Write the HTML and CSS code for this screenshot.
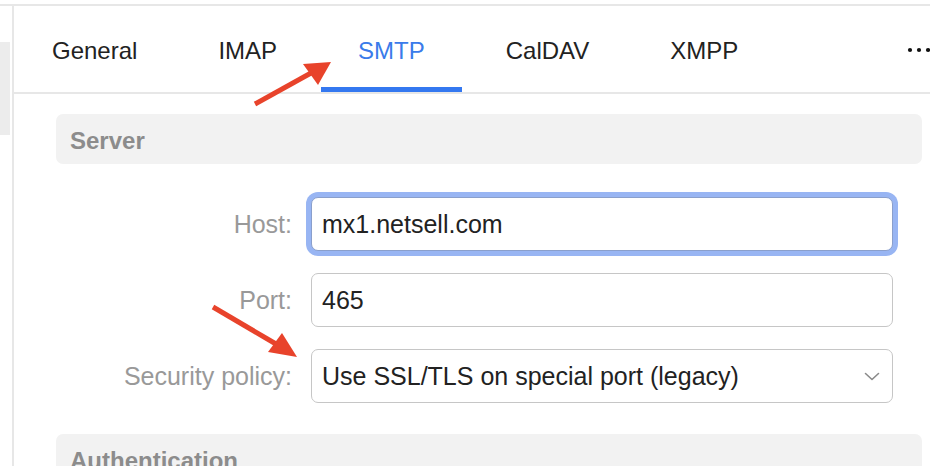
FILE: index.html
```html
<!DOCTYPE html>
<html lang="en">
<head>
    <meta charset="UTF-8">
    <meta name="viewport" content="width=device-width, initial-scale=1.0">
    <title>Account settings - SMTP</title>
    <link rel="stylesheet" href="styles.css">
</head>
<body>
    <div class="topline"></div>
    <div class="layout">
        <div class="sidebar">
            <div class="sidebar-item"></div>
        </div>

        <div class="main">
            <nav class="tabs">
                <div class="tab">General</div>
                <div class="tab">IMAP</div>
                <div class="tab active">SMTP</div>
                <div class="tab">CalDAV</div>
                <div class="tab">XMPP</div>
                <div class="more">
                    <svg width="30" height="8" viewBox="0 0 30 8">
                        <circle cx="10" cy="4" r="2.1" fill="#111"/>
                        <circle cx="19" cy="4" r="2.1" fill="#111"/>
                        <circle cx="28" cy="4" r="2.1" fill="#111"/>
                    </svg>
                </div>
            </nav>

            <div class="content">
                <div class="section-title">Server</div>

                <div class="form">
                    <label class="label">Host:</label>
                    <div class="field focused">mx1.netsell.com</div>

                    <label class="label">Port:</label>
                    <div class="field">465</div>

                    <label class="label">Security policy:</label>
                    <div class="field select">
                        <span>Use SSL/TLS on special port (legacy)</span>
                        <svg width="16" height="9" viewBox="0 0 16 9">
                            <path d="M1.5 1.5 L8 7.5 L14.5 1.5" fill="none" stroke="#8a8a8a" stroke-width="1.6" stroke-linecap="round" stroke-linejoin="round"/>
                        </svg>
                    </div>
                </div>

                <div class="section-title">Authentication</div>
            </div>
        </div>
    </div>

    <!-- annotation arrows drawn over the screenshot -->
    <svg class="arrows" width="930" height="466" viewBox="0 0 930 466">
        <line x1="255" y1="104" x2="311" y2="73" stroke="#e8432b" stroke-width="5"/>
        <polygon points="331,62 303,64 318,85" fill="#e8432b"/>
        <line x1="213" y1="307" x2="276" y2="344" stroke="#e8432b" stroke-width="5"/>
        <polygon points="297,357 268,352 282,333" fill="#e8432b"/>
    </svg>
</body>
</html>
```

FILE: styles.css
```css
body {
    margin: 0;
    width: 930px;
    height: 466px;
    overflow: hidden;
    background: #fff;
    font-family: "Liberation Sans", Arial, sans-serif;
    color: #222;
    position: relative;
}
.topline {
    height: 4px;
    border-bottom: 2px solid #e7e7e7;
}
.layout {
    display: flex;
}
.sidebar {
    width: 12px;
    border-right: 2px solid #e7e7e7;
    height: 470px;
}
.sidebar-item {
    margin-top: 36px;
    width: 10px;
    height: 93px;
    background: #ececec;
}
.main {
    flex: 1;
}
.tabs {
    display: flex;
    height: 86px;
    border-bottom: 2px solid #e7e7e7;
    padding-left: 1px;
    gap: 7px;
}
.tab {
    display: flex;
    align-items: center;
    padding: 3px 37px 0;
    font-size: 24px;
    color: #222;
}
.tab.active {
    color: #3a7bea;
    box-shadow: inset 0 -5px 0 #3478f0;
}
.more {
    margin-left: auto;
    display: flex;
    align-items: center;
    padding-top: 2px;
}
.more svg {
    display: block;
}
.content {
    padding: 20px 8px 0 42px;
}
.section-title {
    height: 50px;
    box-sizing: border-box;
    display: flex;
    align-items: center;
    padding: 3px 0 0 14px;
    background: #f2f2f2;
    border-radius: 7px;
    font-size: 24px;
    font-weight: bold;
    color: #8c8c8c;
}
.form {
    display: grid;
    grid-template-columns: 236px 582px;
    column-gap: 19px;
    row-gap: 22px;
    align-items: center;
    margin: 33px 0 31px;
}
.label {
    text-align: right;
    font-size: 25px;
    color: #999;
}
.field {
    box-sizing: border-box;
    height: 54px;
    border: 1px solid #c6c6c6;
    border-radius: 7px;
    padding: 0 12px 0 10px;
    display: flex;
    align-items: center;
    font-size: 25px;
    color: #222;
    background: #fff;
}
.field.focused {
    border-color: #8a9fcc;
    box-shadow: 0 0 0 5px #98b5f3;
}
.select {
    justify-content: space-between;
}
.select svg {
    display: block;
}
.arrows {
    position: absolute;
    left: 0;
    top: 0;
    pointer-events: none;
}
```
